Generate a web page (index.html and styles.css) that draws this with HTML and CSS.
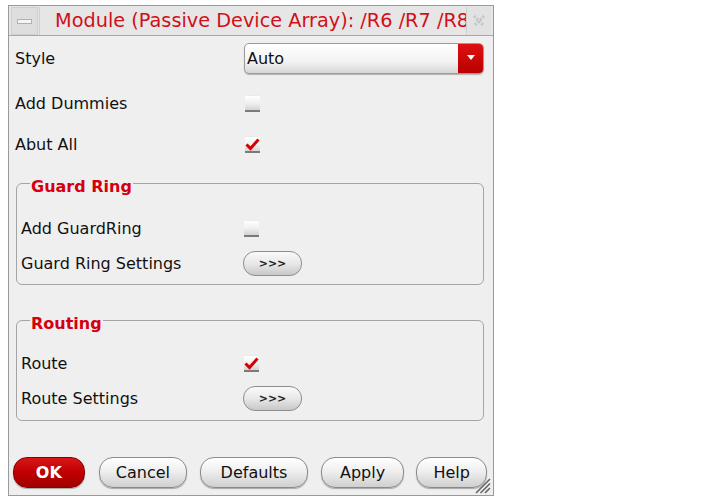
FILE: index.html
```html
<!DOCTYPE html>
<html>
<head>
<meta charset="utf-8">
<link rel="stylesheet" href="styles.css">
</head>
<body>
<div class="window">
  <div class="titlebar">
    <div class="menu-btn"><span class="dash"></span></div>
    <div class="title">Module (Passive Device Array): /R6 /R7 /R8 /R9</div>
    <div class="close-btn">
      <svg width="16" height="16" viewBox="0 0 16 16"><path d="M3 3 L13 13 M13 3 L3 13" stroke="#c4c4c4" stroke-width="3" fill="none" stroke-dasharray="2 1.5"/></svg>
    </div>
  </div>
  <div class="content">
    <div class="row r-style">
      <span class="label">Style</span>
      <div class="select"><span class="sel-text">Auto</span><span class="sel-arrow"><svg width="10" height="6" viewBox="0 0 10 6"><path d="M1 0 L9 0 L5 5 Z" fill="#fff"/></svg></span></div>
    </div>
    <div class="row r-dummies">
      <span class="label">Add Dummies</span>
      <span class="check"></span>
    </div>
    <div class="row r-abut">
      <span class="label">Abut All</span>
      <span class="check checked"><svg width="15" height="13" viewBox="0 0 15 13"><path d="M1.5 6.5 L5.5 10.5 L13.5 1.5" stroke="#d40000" stroke-width="3" fill="none"/></svg></span>
    </div>
    <fieldset class="group g-guard">
      <legend>Guard Ring</legend>
      <div class="row r-g1">
        <span class="label">Add GuardRing</span>
        <span class="check"></span>
      </div>
      <div class="row r-g2">
        <span class="label">Guard Ring Settings</span>
        <span class="more">&gt;&gt;&gt;</span>
      </div>
    </fieldset>
    <fieldset class="group g-route">
      <legend>Routing</legend>
      <div class="row r-g1">
        <span class="label">Route</span>
        <span class="check checked"><svg width="15" height="13" viewBox="0 0 15 13"><path d="M1.5 6.5 L5.5 10.5 L13.5 1.5" stroke="#d40000" stroke-width="3" fill="none"/></svg></span>
      </div>
      <div class="row r-g2">
        <span class="label">Route Settings</span>
        <span class="more">&gt;&gt;&gt;</span>
      </div>
    </fieldset>
    <div class="buttons">
      <span class="btn ok">OK</span>
      <span class="btn b-cancel">Cancel</span>
      <span class="btn b-defaults">Defaults</span>
      <span class="btn b-apply">Apply</span>
      <span class="btn b-help">Help</span>
    </div>
  </div>
  <div class="grip">
    <svg width="18" height="18" viewBox="0 0 18 18"><path d="M17 3 L3 17 M17 7.5 L7.5 17 M17 12 L12 17" stroke="#666" stroke-width="1.6"/></svg>
  </div>
</div>
</body>
</html>
```
FILE: styles.css
```css
html, body {
  margin: 0;
  padding: 0;
  background: #ffffff;
}
body {
  font-family: "DejaVu Sans", "Liberation Sans", sans-serif;
  color: #111;
}
.window {
  position: relative;
  margin: 5px 0 0 8px;
  width: 484px;
  height: 489px;
  border: 1px solid #9a9a9a;
  background: #efefef;
  display: flex;
  flex-direction: column;
  box-sizing: content-box;
}
.titlebar {
  height: 28px;
  display: flex;
  align-items: stretch;
  border-bottom: 1px solid #a8a8a8;
  background: #e6e6e6;
  padding-top: 1px;
}
.menu-btn {
  width: 25px;
  margin-left: 2px;
  border: 1px solid #cfcfcf;
  background: #dedede;
  display: flex;
  align-items: center;
  justify-content: center;
}
.dash {
  width: 13px;
  height: 3px;
  background: #f4f4f4;
  border: 1px solid #b0b0b0;
}
.title {
  flex: 1;
  overflow: hidden;
  white-space: nowrap;
  color: #d0101a;
  font-size: 19.3px;
  line-height: 28px;
  padding-left: 15px;
  border-left: 1px solid #cfcfcf;
  margin-left: 1px;
}
.close-btn {
  width: 24px;
  margin-right: 2px;
  border-left: 1px solid #cfcfcf;
  display: flex;
  align-items: center;
  justify-content: center;
  background: #e2e2e2;
}
.content {
  flex: 1;
  display: flex;
  flex-direction: column;
  padding: 0 6px 0 6px;
  font-size: 16px;
}
.row {
  display: grid;
  grid-template-columns: 229px 1fr;
  align-items: center;
}
.label {
  white-space: nowrap;
}
.r-style {
  margin-top: 6px;
  height: 32px;
}
.select {
  width: 238px;
  height: 29px;
  border: 1px solid #9a9a9a;
  border-radius: 5px;
  background: linear-gradient(#ffffff, #f3f3f3 60%, #d6d6d6);
  display: flex;
  overflow: hidden;
  box-shadow: 0 1px 1px rgba(0,0,0,0.25);
}
.sel-text {
  flex: 1;
  line-height: 29px;
  padding-left: 2px;
}
.sel-arrow {
  width: 25px;
  background: linear-gradient(#e01010, #b80000);
  display: flex;
  align-items: center;
  justify-content: center;
}
.r-dummies {
  margin-top: 12px;
  height: 34px;
}
.r-abut {
  margin-top: 7px;
  height: 34px;
}
.check {
  width: 15px;
  height: 14px;
  margin-left: 1px;
  background: linear-gradient(#ffffff, #f0f0f0 50%, #d4d4d4);
  border-bottom: 2px solid #7a7a7a;
  border-top: 1px solid #eaeaea;
  display: flex;
  align-items: flex-end;
  justify-content: center;
}
.group {
  margin: 0;
  padding: 0 0 0 4px;
  border: 1px solid #a4a4a4;
  border-radius: 6px;
  min-width: 0;
  display: block;
}
.group legend {
  color: #d4000f;
  font-weight: bold;
  font-size: 16px;
  padding: 7px 1px 0 1px;
  margin-left: 9px;
}
.g-guard {
  margin-top: 9px;
  margin-left: 1px;
  margin-right: 3px;
  padding-bottom: 4px;
}
.g-route {
  margin-top: 22px;
  margin-left: 1px;
  margin-right: 3px;
  padding-bottom: 5px;
}
.group .row {
  grid-template-columns: 222px 1fr;
}
.g-guard .r-g1 {
  margin-top: 15px;
  height: 34px;
}
.g-route .r-g1 {
  margin-top: 13px;
  height: 34px;
}
.group .r-g2 {
  margin-top: 1px;
  height: 34px;
}
.more {
  width: 57px;
  height: 23px;
  border: 1px solid #8e8e8e;
  border-radius: 12px;
  background: linear-gradient(#fafafa, #e8e8e8 50%, #c8c8c8);
  font-size: 11px;
  font-weight: bold;
  line-height: 23px;
  text-align: center;
  color: #222;
}
.buttons {
  margin-top: 36px;
  display: flex;
  margin-left: -2px;
}
.btn {
  height: 29px;
  border: 1px solid #8a8a8a;
  border-radius: 14px;
  background: linear-gradient(#ffffff, #efefef 45%, #cfcfcf);
  font-size: 16px;
  line-height: 29px;
  text-align: center;
  box-shadow: 0 1px 1px rgba(0,0,0,0.3);
}
.ok {
  width: 70px;
  background: linear-gradient(#d81818, #c00000 50%, #a00000);
  border-color: #8a0000;
  color: #fff;
  font-weight: bold;
}
.b-cancel { width: 87px; margin-left: 14px; }
.b-defaults { width: 106px; margin-left: 13px; }
.b-apply { width: 82px; margin-left: 13px; }
.b-help { width: 69px; margin-left: 12px; }
.grip {
  position: absolute;
  right: 2px;
  bottom: 1px;
  width: 18px;
  height: 18px;
}
```
